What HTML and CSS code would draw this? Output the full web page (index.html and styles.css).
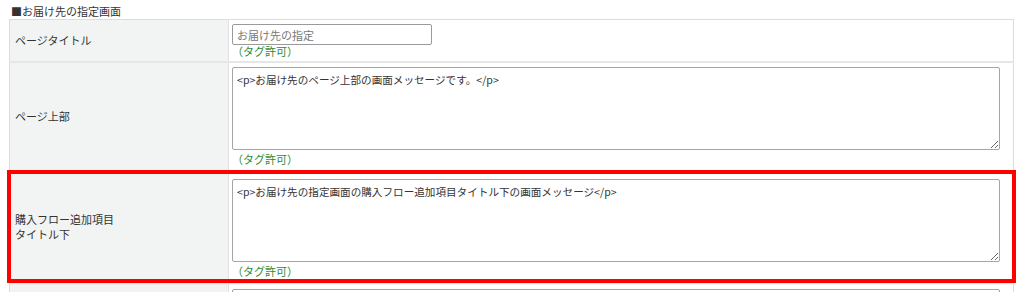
FILE: index.html
```html
<!DOCTYPE html>
<html lang="ja">
<head>
  <meta charset="UTF-8">
  <title>お届け先の指定画面</title>
  <link rel="stylesheet" href="styles.css">
</head>
<body>

<div class="section">
  <div class="section-title">■お届け先の指定画面</div>
  <table class="setting-table">
    <tr class="row-title">
      <th>ページタイトル</th>
      <td>
        <input class="text-input" type="text" placeholder="お届け先の指定">
        <div class="tag-note">（タグ許可）</div>
      </td>
    </tr>
    <tr class="row-top">
      <th>ページ上部</th>
      <td>
        <textarea class="msg-area">&lt;p&gt;お届け先のページ上部の画面メッセージです。&lt;/p&gt;</textarea>
        <div class="tag-note">（タグ許可）</div>
      </td>
    </tr>
    <tr class="row-flow">
      <th>購入フロー追加項目<br>タイトル下</th>
      <td>
        <textarea class="msg-area">&lt;p&gt;お届け先の指定画面の購入フロー追加項目タイトル下の画面メッセージ&lt;/p&gt;</textarea>
        <div class="tag-note">（タグ許可）</div>
        <div class="highlight-box"></div>
      </td>
    </tr>
    <tr class="row-next">
      <th></th>
      <td>
        <textarea class="msg-area"></textarea>
      </td>
    </tr>
  </table>
</div>

</body>
</html>
```

FILE: styles.css
```css
body {
  margin: 0;
  padding: 0 10px 0 9px;
  font-family: "Noto Sans CJK JP", "Noto Sans", sans-serif;
  font-size: 11px;
  color: #333;
  background: #fff;
}
.section-title {
  height: 19px;
  line-height: 22px;
  padding-left: 2px;
  font-size: 11px;
  color: #333;
}
.setting-table {
  width: 1005px;
  border-collapse: collapse;
  border: 1px solid #dcdcdc;
}
.setting-table th,
.setting-table td {
  border-bottom: 2px solid #e6e6e6;
  vertical-align: top;
  padding: 0;
}
.setting-table th {
  width: 218px;
  background: #f2f3f3;
  border-right: 1px solid #e2e2e2;
  text-align: left;
  font-weight: normal;
  font-size: 11px;
  line-height: 15px;
  padding-left: 5px;
  vertical-align: middle;
}
.setting-table td {
  padding: 4px 13px 0 3px;
}
.row-title td { height: 37px; }
.row-title .tag-note { margin-top: -1px; }
.row-top td { height: 103px; }
.row-flow td { height: 103px; padding-top: 7px; position: relative; }
.row-next td { height: 20px; padding-top: 5px; }

.text-input {
  display: block;
  box-sizing: border-box;
  width: 200px;
  height: 21px;
  margin: 0;
  padding: 1px 4px;
  border: 1px solid #9a9a9a;
  border-radius: 2px;
  font-family: inherit;
  font-size: 11px;
}
.text-input::placeholder {
  color: #777;
}
.msg-area {
  display: block;
  box-sizing: border-box;
  width: 768px;
  height: 83px;
  margin: 0;
  padding: 4px 4px;
  border: 1px solid #a5a5a5;
  border-radius: 2px;
  font-family: inherit;
  font-size: 10.6px;
  line-height: 15px;
  color: #333;
}
.tag-note {
  margin-top: 2px;
  font-size: 11px;
  line-height: 15px;
  color: #2e8b2e;
}
.highlight-box {
  position: absolute;
  left: -222px;
  top: -2px;
  width: 1001px;
  height: 105px;
  border: 4px solid #ff0000;
  pointer-events: none;
}
```
